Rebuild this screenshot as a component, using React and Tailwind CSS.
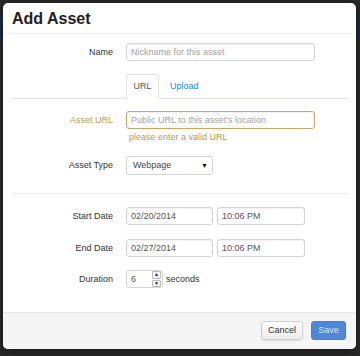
import React from "react";

function Label({ children, warn }) {
  return (
    <div className={`w-[101px] shrink-0 text-right text-[9px] leading-none ${warn ? "text-[#c09853]" : "text-[#333]"}`}>
      {children}
    </div>
  );
}

function TextBox({ value, placeholder, w, warn }) {
  return (
    <div
      className={`${w} h-[18px] box-border rounded-[3px] border bg-white pl-[4px] flex items-center text-[9px] leading-none shadow-[inset_0_1px_1px_rgba(0,0,0,0.06)] ${
        warn ? "border-[#c9a56a]" : "border-[#d4d4d4]"
      } ${value ? "text-[#555]" : "text-[#a3a3a3]"}`}
    >
      {value || placeholder}
    </div>
  );
}

export default function App() {
  return (
    <div className="relative w-[360px] h-[356px] bg-[#2a2a2a] font-['Liberation_Sans',Arial,sans-serif] overflow-hidden">
      <div className="absolute left-0 right-0 top-[13px] h-[27px] bg-[#1d2a42]" />
      <div className="relative pt-[3px] pl-[3px]">
        <div className="w-[353px] h-[346px] bg-white rounded-[5px] flex flex-col overflow-hidden shadow-[0_2px_8px_rgba(0,0,0,0.5)]">
          {/* header */}
          <div className="h-[31px] mx-[4px] border-b border-[#ececec] flex items-center pl-[5px] shrink-0">
            <span className="text-[16px] font-bold text-[#222] leading-none mt-[1px]">Add Asset</span>
          </div>
          {/* body */}
          <div className="flex-1 px-[9px] pt-[9px]">
            <div className="flex items-center gap-[13px]">
              <Label>Name</Label>
              <TextBox w="w-[189px]" placeholder="Nickname for this asset" />
            </div>

            <div className="mt-[13px] border-b border-[#e2e2e2] flex pl-[114px] h-[25px]">
              <div className="w-[33px] h-[25px] box-border border border-[#e2e2e2] border-b-white rounded-t-[3px] bg-white flex items-center justify-center text-[9px] text-[#555] leading-none">
                URL
              </div>
              <div className="h-[24px] pl-[11px] flex items-center text-[9px] text-[#1a8ad0] leading-none">Upload</div>
            </div>

            <div className="mt-[12px] flex items-center gap-[13px]">
              <Label warn>Asset URL</Label>
              <TextBox w="w-[189px]" warn placeholder="Public URL to this asset's location" />
            </div>
            <div className="mt-[2px] h-[12px] pl-[117px] flex items-center text-[9px] text-[#c09853] leading-none">
              please enter a valid URL
            </div>

            <div className="mt-[13px] flex items-center gap-[13px]">
              <Label>Asset Type</Label>
              <div className="w-[87px] h-[19px] box-border rounded-[3px] border border-[#d4d4d4] bg-white pl-[6px] pr-[4px] flex items-center justify-between text-[9px] text-[#444] leading-none">
                <span>Webpage</span>
                <span className="text-[7px] text-[#111]">▼</span>
              </div>
            </div>

            <div className="mt-[18px] border-t border-[#ececec]" />

            <div className="mt-[13px] flex items-center gap-[13px]">
              <Label>Start Date</Label>
              <div className="flex gap-[4px]">
                <TextBox w="w-[87px]" value="02/20/2014" />
                <TextBox w="w-[88px]" value="10:06 PM" />
              </div>
            </div>

            <div className="mt-[14px] flex items-center gap-[13px]">
              <Label>End Date</Label>
              <div className="flex gap-[4px]">
                <TextBox w="w-[87px]" value="02/27/2014" />
                <TextBox w="w-[88px]" value="10:06 PM" />
              </div>
            </div>

            <div className="mt-[13px] flex items-center gap-[13px]">
              <Label>Duration</Label>
              <div className="flex items-center gap-[3px]">
                <div className="w-[37px] h-[18px] box-border rounded-[3px] border border-[#d4d4d4] bg-white pl-[4px] pr-[1px] flex items-center justify-between text-[9px] text-[#555] leading-none">
                  <span>6</span>
                  <div className="flex flex-col w-[9px] h-[16px] gap-[1px]">
                    <div className="flex-1 border border-[#bbb] rounded-[1px] bg-[#f4f4f4] flex items-center justify-center text-[5px] text-[#222]">▲</div>
                    <div className="flex-1 border border-[#bbb] rounded-[1px] bg-[#f4f4f4] flex items-center justify-center text-[5px] text-[#222]">▼</div>
                  </div>
                </div>
                <span className="text-[9px] text-[#333] leading-none">seconds</span>
              </div>
            </div>
          </div>
          {/* footer */}
          <div className="h-[37px] shrink-0 bg-[#f5f5f5] border-t border-[#e6e6e6] flex items-center justify-end gap-[8px] pr-[10px] pb-[1px]">
            <div className="w-[42px] h-[19px] box-border rounded-[3px] border border-[#cfcfcf] bg-[linear-gradient(#ffffff,#ececec)] shadow-[0_1px_1px_rgba(0,0,0,0.08)] flex items-center justify-center text-[9px] text-[#333] leading-none">
              Cancel
            </div>
            <div className="w-[35px] h-[19px] box-border rounded-[3px] border border-[#4a7fd4] bg-[#4d86db] flex items-center justify-center text-[9px] text-[#dfe9fb] leading-none">
              Save
            </div>
          </div>
        </div>
      </div>
    </div>
  );
}
